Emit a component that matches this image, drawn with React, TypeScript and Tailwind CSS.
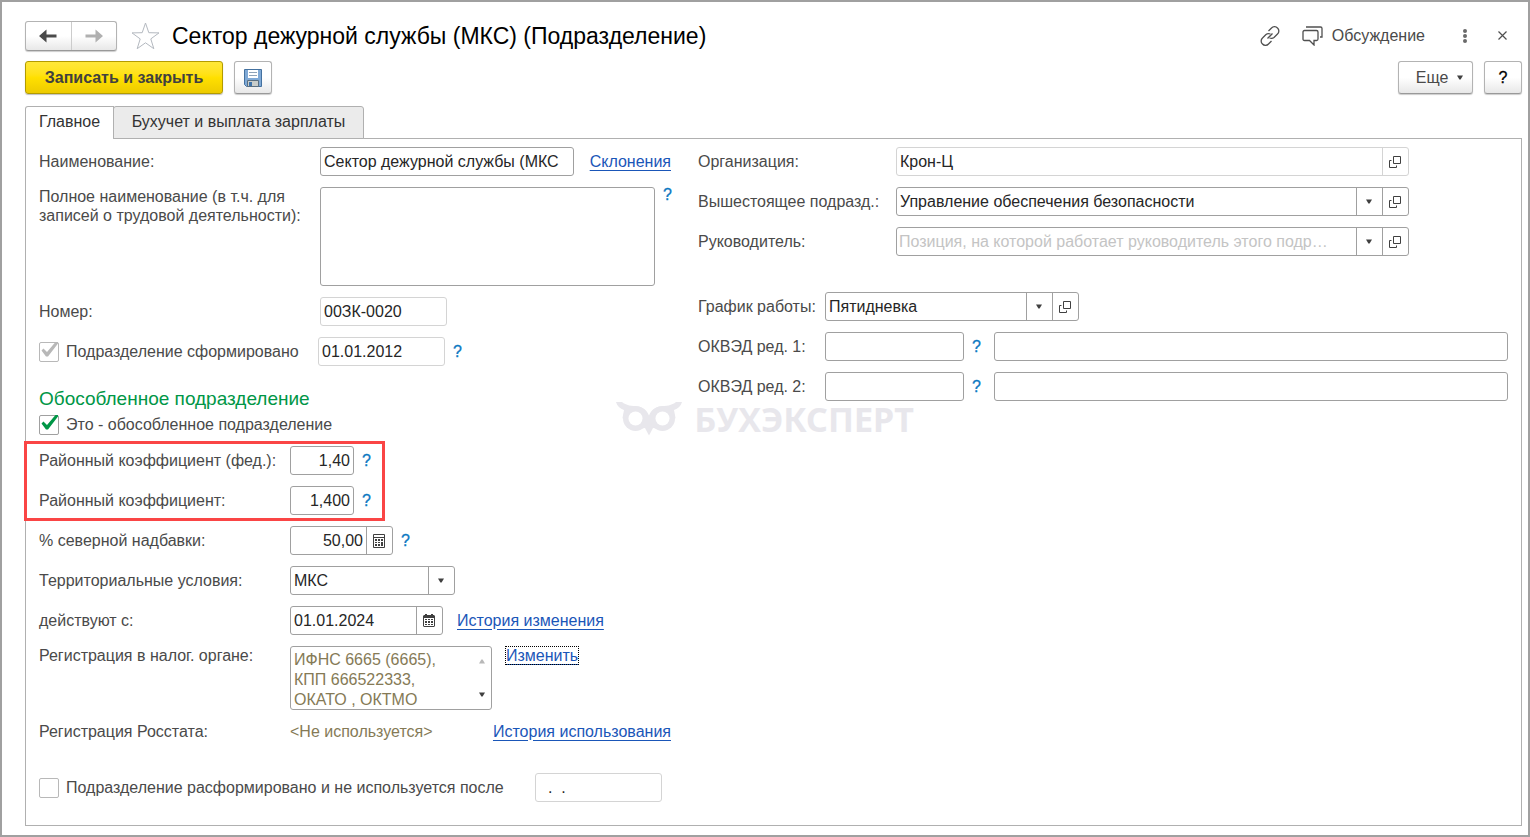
import React, { useState } from "react";
import clsx from "clsx";

const fieldBorder = "border border-[#a0a0a0] rounded-[3px]";
const mutedBorder = "border border-[#d4d4d4] rounded-[3px]";
const buttonLook =
  "border border-[#b3b3b3] border-b-[#999999] rounded-[3px] bg-linear-to-b from-white from-50% to-[#e8e8e8] shadow-[0_1px_1px_rgba(0,0,0,0.2)]";

function Arrow({ flip = false, light = false }) {
  return (
    <svg width="6" height="5" viewBox="0 0 6 5" className={clsx(flip && "rotate-180")} aria-hidden="true">
      <path d="M0 0.5h6L3.6 4.5H2.4z" fill={light ? "#b8b8b8" : "#404040"} />
    </svg>
  );
}

function OpenIcon() {
  return (
    <svg width="12" height="12" viewBox="0 0 12 12" fill="none" stroke="#404040" aria-hidden="true">
      <path d="M4.5 0.5h7v7h-7z" />
      <path d="M2.5 4.5h-2v7h7v-2" />
    </svg>
  );
}

function CalcIcon() {
  return (
    <svg width="12" height="14" viewBox="0 0 12 14" aria-hidden="true">
      <path d="M0.5 0.5h11v13H0.5z" fill="none" stroke="#404040" />
      <path d="M1 3.5h10" stroke="#404040" />
      <path
        d="M2 5h2v2H2zM5 5h2v2H5zM8 5h2v2H8zM2 8h2v1H2zM5 8h2v1H5zM8 8h2v4H8zM2 10h2v2H2zM5 10h2v2H5z"
        fill="#404040"
      />
    </svg>
  );
}

function CalendarIcon() {
  return (
    <svg width="12" height="13" viewBox="0 0 12 13" aria-hidden="true">
      <path d="M1 1h1V0h2v1h4V0h2v1h1l1 1v10l-1 1H1l-1-1V2z" fill="#404040" />
      <path d="M1 4h10v8H1z" fill="#fff" />
      <path
        d="M2 5h2v1H2zM5 5h2v1H5zM8 5h2v1H8zM2 7h2v2H2zM5 7h2v2H5zM8 7h2v2H8zM2 10h2v1H2zM5 10h2v1H5zM8 10h2v1H8z"
        fill="#404040"
      />
    </svg>
  );
}

function FloppyIcon() {
  return (
    <svg width="18" height="18" viewBox="0 0 18 18" aria-hidden="true">
      <path d="M0.5 0.5h17v17H2.5l-2-2z" fill="#7fa9d6" stroke="#44719f" />
      <path d="M4 1h10v8H4z" fill="#fff" />
      <path d="M5 3.5h8M5 6.5h8" stroke="#8fa3b8" />
      <path d="M3.5 11.5h11v6h-11z" fill="#c9cdca" stroke="#5b6f80" />
      <path d="M5 13h3v4H5z" fill="#3f74ab" />
    </svg>
  );
}

function OwlIcon() {
  return (
    <svg width="66" height="34" viewBox="0 0 66 34" aria-hidden="true">
      <path
        d="M0 0h6c4 3.5 10 4 16 4.500 5 .500 9 4 11 9 2-5 6-8.500 11-9 6-.500 12-1 16-4.500h6c-1 4-4 6.500-8 8l1.500 8L50 28 37 26l-4 7.500L29 26 16 28 6.500 16 8 8C4 6.500 1 4 0 0z"
        fill="#e8e7ec"
      />
      <circle cx="19.500" cy="16.500" r="12.500" fill="#e8e7ec" />
      <circle cx="46.500" cy="16.500" r="12.500" fill="#e8e7ec" />
      <circle cx="19.500" cy="16.500" r="7" fill="#fff" />
      <circle cx="46.500" cy="16.500" r="7" fill="#fff" />
    </svg>
  );
}

function Help() {
  return (
    <button type="button" className="w-2 text-[#0a78c2] [-webkit-text-stroke:0.3px]" aria-label="Справка">
      ?
    </button>
  );
}

function TextLink({ children, focused = false }: { children: React.ReactNode; focused?: boolean }) {
  return (
    <a
      href="#"
      className={clsx(
        "text-[#1a56b8] underline underline-offset-3",
        focused && "outline-1 outline-dotted outline-black"
      )}
    >
      {children}
    </a>
  );
}

type RowProps = {
  id: string;
  label: string;
  labelWidth: string;
  children: React.ReactNode;
};

function Row({ id, label, labelWidth, children }: RowProps) {
  return (
    <div className="flex min-h-[29px] items-center">
      <label htmlFor={id} className={clsx("shrink-0 whitespace-nowrap", labelWidth)}>
        {label}
      </label>
      {children}
    </div>
  );
}

type InputProps = {
  id: string;
  value?: string;
  width: string;
  muted?: boolean;
  right?: boolean;
  label?: string;
  icon?: React.ReactNode;
  iconLabel?: string;
};

function Input({ id, value = "", width, muted, right, label, icon, iconLabel }: InputProps) {
  const [text, setText] = useState(value);
  return (
    <div className={clsx("flex h-[29px] bg-white", muted ? mutedBorder : fieldBorder, width)}>
      <input
        id={id}
        aria-label={label}
        value={text}
        readOnly={muted}
        onChange={(e) => setText(e.target.value)}
        className={clsx("min-w-0 flex-1 px-[3px] text-[#262626] outline-none", right && "text-right")}
      />
      {icon && (
        <button
          type="button"
          aria-label={iconLabel}
          className={clsx(
            "flex w-[26px] shrink-0 items-center justify-center border-l pr-px",
            muted ? "border-[#d4d4d4]" : "border-[#a0a0a0]"
          )}
        >
          {icon}
        </button>
      )}
    </div>
  );
}

type SelectProps = {
  id: string;
  value: string;
  width: string;
  placeholder?: boolean;
  openable?: boolean;
};

function Select({ id, value, width, placeholder, openable }: SelectProps) {
  return (
    <div className={clsx("flex h-[29px] bg-white", fieldBorder, width)}>
      <div className="relative flex min-w-0 flex-1">
        <select
          id={id}
          className={clsx(
            "w-full appearance-none pr-[26px] outline-none",
            placeholder ? "pl-[2px] text-[#c4c4c4]" : "pl-[3px] text-[#262626]"
          )}
        >
          <option>{value}</option>
        </select>
        <span className="pointer-events-none absolute inset-y-0 right-0 flex w-[26px] items-center justify-center border-l border-[#a0a0a0] pr-px">
          <Arrow />
        </span>
      </div>
      {openable && (
        <button
          type="button"
          aria-label="Открыть"
          className="flex w-[26px] shrink-0 items-center justify-center border-l border-[#a0a0a0] pr-px"
        >
          <OpenIcon />
        </button>
      )}
    </div>
  );
}

type CheckProps = {
  label: string;
  initial?: boolean;
  disabled?: boolean;
};

function Check({ label, initial = false, disabled }: CheckProps) {
  const [checked, setChecked] = useState(initial);
  return (
    <label className="flex items-center gap-[7px] whitespace-nowrap">
      <span className="relative flex size-5">
        <input
          type="checkbox"
          checked={checked}
          disabled={disabled}
          onChange={() => setChecked(!checked)}
          className={clsx(
            "size-5 appearance-none rounded-[2px] border bg-white",
            disabled || !initial ? "border-[#b8b8b8]" : "border-[#a0a0a0]"
          )}
        />
        {checked && (
          <svg viewBox="0 0 20 20" className="pointer-events-none absolute inset-0 size-5 overflow-visible" aria-hidden="true">
            <path
              d="M2.500 8.500l2-2L8 10 16.500 0 19 0 19 1.500 9 14.500H7z"
              fill={disabled ? "#b8b8b8" : "#009646"}
            />
          </svg>
        )}
      </span>
      {label}
    </label>
  );
}

function Header() {
  return (
    <header className="flex h-[31px] items-center">
      <div className={clsx("flex h-[30px] w-[92px]", buttonLook)}>
        <button type="button" aria-label="Назад" className="flex flex-1 items-center justify-center border-r border-[#cccccc]">
          <svg width="18" height="14" viewBox="0 0 18 14" aria-hidden="true">
            <path d="M0 7l7.500-6.500V5.500H17.500v3H7.500v5z" fill="#4a4a4a" />
          </svg>
        </button>
        <button type="button" aria-label="Вперед" className="flex flex-1 items-center justify-center">
          <svg width="18" height="14" viewBox="0 0 18 14" aria-hidden="true">
            <path d="M18 7l-7.500-6.500V5.500H0.500v3h10v5z" fill="#b0b0b0" />
          </svg>
        </button>
      </div>
      <button type="button" aria-label="В избранное" className="ml-[14px]">
        <svg width="29" height="28" viewBox="0 0 29 28" aria-hidden="true">
          <path
            d="M14.500 1l3.300 9.700 10.200.2-8.200 6 3 9.800-8.300-5.900-8.300 5.900 3-9.800-8.200-6 10.200-.2z"
            fill="none"
            stroke="#b4b9c0"
          />
        </svg>
      </button>
      <h1 className="ml-3 text-[23px] whitespace-nowrap text-black">Сектор дежурной службы (МКС) (Подразделение)</h1>
      <div className="ml-auto flex items-center pr-[15px]">
        <button type="button" aria-label="Получить ссылку">
          <svg width="20" height="20" viewBox="0 0 20 20" fill="none" stroke="#505050" strokeWidth="1.300" aria-hidden="true">
            <path d="M8.500 5l3-3a4 4 0 0 1 6 0 4 4 0 0 1 0 6l-3.500 3.500c-1.500 1.200-3 1-4.500.500" />
            <path d="M11.500 15l-3 3a4 4 0 0 1-6 0 4 4 0 0 1 0-6L6 8.500c1.500-1.200 3-1 4.500-.500" />
            <path d="M7.500 12.500l5-5" />
          </svg>
        </button>
        <button type="button" className="ml-[22px] flex items-center gap-[9px]">
          <svg width="21" height="20" viewBox="0 0 21 20" fill="none" stroke="#505050" strokeWidth="1.300" aria-hidden="true">
            <path d="M4 1h14.500c1 0 1.500.500 1.500 1.500V11h-2" />
            <path d="M2.500 4.500h12c1 0 1.500.500 1.500 1.500v7c0 1-.500 1.500-1.500 1.500H12V19l-4.500-4.500h-5C1.500 14.500 1 14 1 13V6c0-1 .500-1.500 1.500-1.500z" />
          </svg>
          Обсуждение
        </button>
        <button type="button" aria-label="Меню" className="ml-[37px]">
          <svg width="6" height="16" viewBox="0 0 6 16" fill="#6a6a6a" aria-hidden="true">
            <circle cx="3" cy="3" r="2" />
            <circle cx="3" cy="8" r="2" />
            <circle cx="3" cy="13" r="2" />
          </svg>
        </button>
        <button type="button" aria-label="Закрыть" className="ml-[30px]">
          <svg width="9" height="9" viewBox="0 0 9 9" stroke="#505050" strokeWidth="1.200" aria-hidden="true">
            <path d="M0.500 0.500l8 8M8.500 0.500l-8 8" />
          </svg>
        </button>
      </div>
    </header>
  );
}

function Toolbar() {
  return (
    <div className="mt-[10px] flex h-[33px] items-stretch">
      <button
        type="button"
        className="w-[198px] rounded-[3px] border border-[#b39b00] bg-linear-to-b from-[#ffe838] via-[#ffe000] to-[#edcb00] font-bold text-[#404040] shadow-[0_1px_1px_rgba(0,0,0,0.25)]"
      >
        Записать и закрыть
      </button>
      <button type="button" aria-label="Записать" className={clsx("ml-[11px] flex w-[38px] items-center justify-center", buttonLook)}>
        <FloppyIcon />
      </button>
      <button type="button" className={clsx("ml-auto flex w-[75px] items-center justify-center gap-[9px] pl-2", buttonLook)}>
        Еще
        <Arrow />
      </button>
      <button type="button" className={clsx("ml-[11px] w-[38px] text-black [-webkit-text-stroke:0.3px]", buttonLook)}>
        ?
      </button>
    </div>
  );
}

function LeftColumn() {
  return (
    <div className="w-[632px] shrink-0">
      <div className="flex flex-col gap-[11px]">
        <Row id="name" label="Наименование:" labelWidth="w-[281px]">
          <Input id="name" value="Сектор дежурной службы (МКС" width="w-[254px]" />
          <span className="ml-auto">
            <TextLink>Склонения</TextLink>
          </span>
        </Row>
        <div className="flex items-start">
          <label htmlFor="fullName" className="w-[281px] shrink-0 whitespace-nowrap leading-[19px]">
            Полное наименование (в т.ч. для
            <br />
            записей о трудовой деятельности):
          </label>
          <textarea id="fullName" className={clsx("h-[99px] w-[335px] resize-none px-[3px] outline-none", fieldBorder)} />
          <span className="ml-auto leading-4">
            <Help />
          </span>
        </div>
        <Row id="number" label="Номер:" labelWidth="w-[281px]">
          <Input id="number" value="00ЗК-0020" width="w-[127px]" muted />
        </Row>
        <div className="flex items-center">
          <Check label="Подразделение сформировано" initial disabled />
          <span className="ml-auto flex w-[353px] items-center gap-2">
            <Input id="formedAt" label="Дата формирования" value="01.01.2012" width="w-[127px]" muted />
            <Help />
          </span>
        </div>
      </div>

      <h2 className="mt-[21px] text-[19px] leading-6 text-[#009646]">Обособленное подразделение</h2>
      <div className="mt-1">
        <Check label="Это - обособленное подразделение" initial />
      </div>

      <div className="mt-[11px] flex flex-col gap-[11px]">
        <div className="relative flex w-[331px] flex-col gap-[11px]">
          <Row id="fedCoef" label="Районный коэффициент (фед.):" labelWidth="w-[251px]">
            <Input id="fedCoef" value="1,40" width="w-[64px]" right />
            <span className="ml-2">
              <Help />
            </span>
          </Row>
          <Row id="coef" label="Районный коэффициент:" labelWidth="w-[251px]">
            <Input id="coef" value="1,400" width="w-[64px]" right />
            <span className="ml-2">
              <Help />
            </span>
          </Row>
          {/* highlight frame */}
          <div className="pointer-events-none absolute -inset-x-[15px] -top-[5px] -bottom-[6px] border-3 border-[#fa4545]"></div>
        </div>
        <Row id="north" label="% северной надбавки:" labelWidth="w-[251px]">
          <Input id="north" value="50,00" width="w-[103px]" right icon={<CalcIcon />} iconLabel="Калькулятор" />
          <span className="ml-2">
            <Help />
          </span>
        </Row>
        <Row id="territory" label="Территориальные условия:" labelWidth="w-[251px]">
          <Select id="territory" value="МКС" width="w-[165px]" />
        </Row>
        <Row id="since" label="действуют с:" labelWidth="w-[251px]">
          <Input id="since" value="01.01.2024" width="w-[153px]" icon={<CalendarIcon />} iconLabel="Календарь" />
          <span className="ml-[14px]">
            <TextLink>История изменения</TextLink>
          </span>
        </Row>
        <div className="flex items-start leading-5">
          <label htmlFor="tax" className="w-[251px] shrink-0 whitespace-nowrap">
            Регистрация в налог. органе:
          </label>
          <div className={clsx("flex h-[64px] w-[202px]", fieldBorder)}>
            <textarea
              id="tax"
              readOnly
              value={"ИФНС 6665 (6665),\nКПП 666522333,\nОКАТО , ОКТМО"}
              className="min-w-0 flex-1 resize-none overflow-hidden px-[3px] pt-[3px] text-[#857a56] outline-none"
            />
            <span className="flex w-[18px] flex-col items-center justify-between py-3">
              <Arrow flip light />
              <Arrow />
            </span>
          </div>
          <span className="ml-[14px]">
            <TextLink focused>Изменить</TextLink>
          </span>
        </div>
      </div>

      <div className="mt-[7px] flex min-h-[29px] items-center">
        <span className="w-[251px]">Регистрация Росстата:</span>
        <span className="text-[#857a56]">&lt;Не используется&gt;</span>
        <span className="ml-auto">
          <TextLink>История использования</TextLink>
        </span>
      </div>
      <div className="mt-[27px] flex items-center">
        <Check label="Подразделение расформировано и не используется после" />
        <span className="ml-auto w-[136px]">
          <Input id="closedAt" label="Не используется после" value="  .  ." width="w-[127px]" muted />
        </span>
      </div>
    </div>
  );
}

function RightColumn() {
  return (
    <div className="flex min-w-0 flex-1 flex-col gap-[11px]">
      <Row id="org" label="Организация:" labelWidth="w-[198px]">
        <Input id="org" value="Крон-Ц" width="w-[513px]" muted icon={<OpenIcon />} iconLabel="Открыть" />
      </Row>
      <Row id="parent" label="Вышестоящее подразд.:" labelWidth="w-[198px]">
        <Select id="parent" value="Управление обеспечения безопасности" width="w-[513px]" openable />
      </Row>
      <Row id="head" label="Руководитель:" labelWidth="w-[198px]">
        <Select
          id="head"
          value="Позиция, на которой работает руководитель этого подр…"
          width="w-[513px]"
          placeholder
          openable
        />
      </Row>
      <div className="mt-[25px] flex flex-col gap-[11px]">
        <Row id="schedule" label="График работы:" labelWidth="w-[127px]">
          <Select id="schedule" value="Пятидневка" width="w-[254px]" openable />
        </Row>
        <Row id="okved1" label="ОКВЭД ред. 1:" labelWidth="w-[127px]">
          <Input id="okved1" width="w-[139px]" />
          <span className="mr-[14px] ml-2">
            <Help />
          </span>
          <Input id="okved1Name" label="Наименование ОКВЭД ред. 1" width="flex-1" />
        </Row>
        <Row id="okved2" label="ОКВЭД ред. 2:" labelWidth="w-[127px]">
          <Input id="okved2" width="w-[139px]" />
          <span className="mr-[14px] ml-2">
            <Help />
          </span>
          <Input id="okved2Name" label="Наименование ОКВЭД ред. 2" width="flex-1" />
        </Row>
      </div>
    </div>
  );
}

export default function App() {
  return (
    <div className="relative flex min-h-screen flex-col border-2 border-[#a0a0a0] bg-white pt-[18px] pr-[6px] pb-[9px] pl-[23px] font-['Liberation_Sans',Arial,sans-serif] text-[16px] leading-5 text-[#4a4a4a]">
      <Header />
      <Toolbar />
      <nav className="relative z-10 mt-[12px] -mb-px flex h-[33px] text-[#333333]">
        <button type="button" className="w-[89px] rounded-tl-[3px] border border-b-0 border-[#b0b0b0] bg-white pb-[3px]">
          Главное
        </button>
        <button type="button" className="-ml-px w-[251px] rounded-t-[3px] border border-[#b0b0b0] bg-[#ebebeb] pb-[2px]">
          Бухучет и выплата зарплаты
        </button>
      </nav>
      <main className="flex flex-1 gap-[27px] border border-[#b0b0b0] pt-2 pr-[13px] pb-[23px] pl-[13px]">
        <LeftColumn />
        <RightColumn />
      </main>
      {/* watermark */}
      <div className="pointer-events-none absolute inset-0 flex items-center justify-center gap-3">
        <OwlIcon />
        <span className="font-['Noto_Sans',sans-serif] text-[34px] leading-8 font-bold text-[#e8e7ec]">БУХЭКСПЕРТ</span>
      </div>
    </div>
  );
}
